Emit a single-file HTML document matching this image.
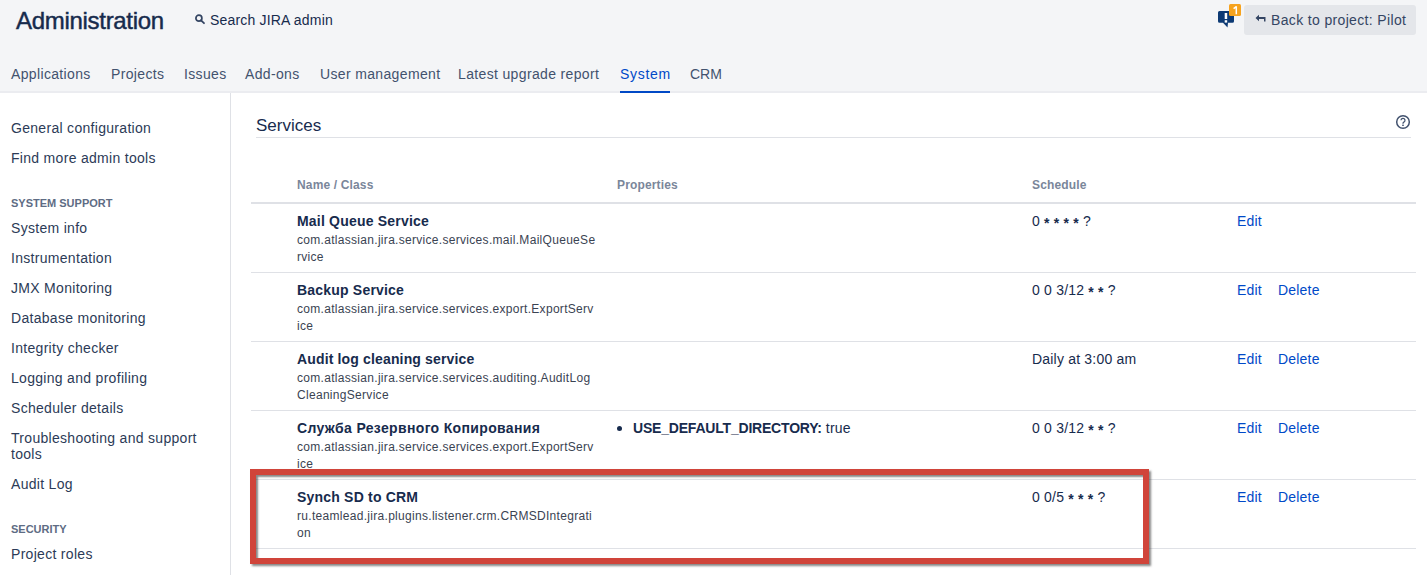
<!DOCTYPE html>
<html><head><meta charset="utf-8">
<style>
*{box-sizing:border-box;margin:0;padding:0}
html,body{width:1427px;height:575px;overflow:hidden;background:#fff;font-family:"Liberation Sans",sans-serif;color:#172b4d}
.abs{position:absolute;white-space:nowrap}
#hdr{position:absolute;left:0;top:0;width:1427px;height:93px;background:#f4f5f7;border-bottom:2px solid #ebecf0}
#title{left:16px;top:6px;font-size:24px;line-height:30px;color:#172b4d;letter-spacing:-0.3px;-webkit-text-stroke:0.45px #172b4d}
#search{left:210px;top:12px;font-size:14px;line-height:16px;color:#172b4d;letter-spacing:0.18px}
.nav{top:66px;font-size:14px;line-height:16px;color:#42526e;letter-spacing:0.35px}
.nav.sel{color:#0049c8}
#uline{position:absolute;left:620px;top:91px;width:50px;height:2px;background:#0049c6}
#side{position:absolute;left:0;top:93px;width:231px;height:482px;border-right:1px solid #dfe1e6}
.si{left:11px;font-size:14px;line-height:16px;color:#2c3b57;letter-spacing:0.3px}
.sh{left:11px;font-size:11px;line-height:12px;font-weight:bold;color:#5e6c84}
.t{font-size:14px;line-height:16px;letter-spacing:0.2px}
.b{font-weight:bold}
.cls{font-size:12px;line-height:17px;color:#3a4352;letter-spacing:0.3px}
.th{font-size:12px;line-height:14px;font-weight:bold;color:#7a869a;letter-spacing:0.15px}
.lnk{color:#0049c8;font-size:14px;line-height:16px;letter-spacing:0.2px}
.hr{position:absolute;background:#dfe1e6}
.ast{position:relative;top:2px;font-weight:bold}
</style></head><body>
<div id="hdr"></div>
<div class="abs" id="title">Administration</div>
<svg class="abs" style="left:194px;top:13px" width="12" height="12" viewBox="0 0 12 12"><circle cx="4.9" cy="5.2" r="3" fill="none" stroke="#344563" stroke-width="1.7"/><path d="M7 7.3 L10 10.2" stroke="#344563" stroke-width="1.8" stroke-linecap="round"/></svg>
<div class="abs" id="search">Search JIRA admin</div>
<div class="abs nav" style="left:11px">Applications</div>
<div class="abs nav" style="left:111px">Projects</div>
<div class="abs nav" style="left:184px">Issues</div>
<div class="abs nav" style="left:245px">Add-ons</div>
<div class="abs nav" style="left:320px">User management</div>
<div class="abs nav" style="left:458px">Latest upgrade report</div>
<div class="abs nav sel" style="left:620px;letter-spacing:0.7px">System</div>
<div class="abs nav" style="left:690px;letter-spacing:0">CRM</div>
<div id="uline"></div>
<div id="side"></div>
<div class="abs si" style="top:120px">General configuration</div>
<div class="abs si" style="top:150px">Find more admin tools</div>
<div class="abs sh" style="top:197px">SYSTEM SUPPORT</div>
<div class="abs si" style="top:220px">System info</div>
<div class="abs si" style="top:250px">Instrumentation</div>
<div class="abs si" style="top:280px">JMX Monitoring</div>
<div class="abs si" style="top:310px">Database monitoring</div>
<div class="abs si" style="top:340px">Integrity checker</div>
<div class="abs si" style="top:370px">Logging and profiling</div>
<div class="abs si" style="top:400px">Scheduler details</div>
<div class="abs si" style="top:430px">Troubleshooting and support</div>
<div class="abs si" style="top:446px">tools</div>
<div class="abs si" style="top:476px">Audit Log</div>
<div class="abs sh" style="top:523px">SECURITY</div>
<div class="abs si" style="top:546px">Project roles</div>
<div class="abs" style="left:256px;top:116px;font-size:17px;line-height:20px">Services</div>
<div class="hr" style="left:256px;top:137px;width:1155px;height:1px"></div>
<div class="abs th" style="left:297px;top:178px">Name / Class</div>
<div class="abs th" style="left:617px;top:178px">Properties</div>
<div class="abs th" style="left:1032px;top:178px">Schedule</div>
<div class="hr" style="left:251px;top:202px;width:1165px;height:2px"></div>
<div class="abs t b" style="left:297px;top:213px;letter-spacing:0.2px">Mail Queue Service</div>
<div class="abs cls" style="left:297px;top:232px">com.atlassian.jira.service.services.mail.MailQueueSe<br>rvice</div>
<div class="abs t" style="left:1032px;top:213px">0 <span class="ast">*</span> <span class="ast">*</span> <span class="ast">*</span> <span class="ast">*</span> ?</div>
<div class="abs lnk" style="left:1237px;top:213px">Edit</div>
<div class="hr" style="left:251px;top:272px;width:1165px;height:1px"></div>
<div class="abs t b" style="left:297px;top:282px;letter-spacing:0.2px">Backup Service</div>
<div class="abs cls" style="left:297px;top:301px">com.atlassian.jira.service.services.export.ExportServ<br>ice</div>
<div class="abs t" style="left:1032px;top:282px">0 0 3/12 <span class="ast">*</span> <span class="ast">*</span> ?</div>
<div class="abs lnk" style="left:1237px;top:282px">Edit</div>
<div class="abs lnk" style="left:1278px;top:282px">Delete</div>
<div class="hr" style="left:251px;top:341px;width:1165px;height:1px"></div>
<div class="abs t b" style="left:297px;top:351px;letter-spacing:0.15px">Audit log cleaning service</div>
<div class="abs cls" style="left:297px;top:370px">com.atlassian.jira.service.services.auditing.AuditLog<br>CleaningService</div>
<div class="abs t" style="left:1032px;top:351px">Daily at 3:00 am</div>
<div class="abs lnk" style="left:1237px;top:351px">Edit</div>
<div class="abs lnk" style="left:1278px;top:351px">Delete</div>
<div class="hr" style="left:251px;top:410px;width:1165px;height:1px"></div>
<div class="abs t b" style="left:297px;top:420px;letter-spacing:0.34px">Служба Резервного Копирования</div>
<div class="abs cls" style="left:297px;top:439px">com.atlassian.jira.service.services.export.ExportServ<br>ice</div>
<div class="abs t" style="left:633px;top:420px"><span style="position:absolute;left:-16px;top:6px;width:5px;height:5px;border-radius:50%;background:#172b4d"></span><b style="letter-spacing:-0.2px">USE_DEFAULT_DIRECTORY:</b> true</div>
<div class="abs t" style="left:1032px;top:420px">0 0 3/12 <span class="ast">*</span> <span class="ast">*</span> ?</div>
<div class="abs lnk" style="left:1237px;top:420px">Edit</div>
<div class="abs lnk" style="left:1278px;top:420px">Delete</div>
<div class="hr" style="left:251px;top:479px;width:1165px;height:1px"></div>
<div class="abs t b" style="left:297px;top:489px;letter-spacing:0.2px">Synch SD to CRM</div>
<div class="abs cls" style="left:297px;top:508px">ru.teamlead.jira.plugins.listener.crm.CRMSDIntegrati<br>on</div>
<div class="abs t" style="left:1032px;top:489px">0 0/5 <span class="ast">*</span> <span class="ast">*</span> <span class="ast">*</span> ?</div>
<div class="abs lnk" style="left:1237px;top:489px">Edit</div>
<div class="abs lnk" style="left:1278px;top:489px">Delete</div>
<div class="hr" style="left:251px;top:548px;width:1165px;height:1px"></div>
<svg class="abs" style="left:1216px;top:2px" width="28" height="28" viewBox="0 0 28 28">
  <path d="M3.5 9 h13 a1.5 1.5 0 0 1 1.5 1.5 v8.7 a1.5 1.5 0 0 1 -1.5 1.5 h-4.5 l-0.5 4.8 l-4.5 -4.8 h-3.5 a1.5 1.5 0 0 1 -1.5 -1.5 v-8.7 a1.5 1.5 0 0 1 1.5 -1.5z" fill="#0d3a74"/>
  <rect x="8.7" y="11" width="2.5" height="6" fill="#fff"/>
  <rect x="8.7" y="18.2" width="2.5" height="2.4" fill="#fff"/>
  <rect x="13" y="2" width="12" height="12" rx="1.5" fill="#f6a31f"/>
  <path d="M20.3 4.2 V12.2 M20.3 4.6 L17.6 6.6" stroke="#fff" stroke-width="1.5" fill="none"/>
</svg>
<div class="abs" style="left:1244px;top:5px;width:172px;height:30px;background:#e4e6ea;border-radius:3px"></div>
<svg class="abs" style="left:1255px;top:13px" width="12" height="10" viewBox="0 0 12 10"><path d="M0.5 5 L4 1.8 V3.9 H10.5 V8.5 H9 V6.1 H4 V8.2 Z" fill="#344563"/></svg>
<div class="abs t" style="left:1271px;top:12px;color:#344563;letter-spacing:0.35px">Back to project: Pilot</div>
<svg class="abs" style="left:1395px;top:114px" width="16" height="16" viewBox="0 0 16 16">
  <circle cx="8" cy="8" r="6.3" fill="none" stroke="#42526e" stroke-width="1.5"/>
  <path d="M6 6.3 a2 2 0 1 1 2.9 1.8 c-0.6 0.3 -0.9 0.7 -0.9 1.4 v0.3" fill="none" stroke="#42526e" stroke-width="1.25"/>
  <rect x="7.2" y="10.6" width="1.6" height="1.4" fill="#42526e"/>
</svg>
<div class="abs" style="left:250px;top:469px;width:899px;height:95px;border:6px solid #d0443a;box-shadow:2px 2px 2px rgba(55,55,55,0.6), inset 2px 2px 2px rgba(55,55,55,0.6)"></div>

</body></html>
